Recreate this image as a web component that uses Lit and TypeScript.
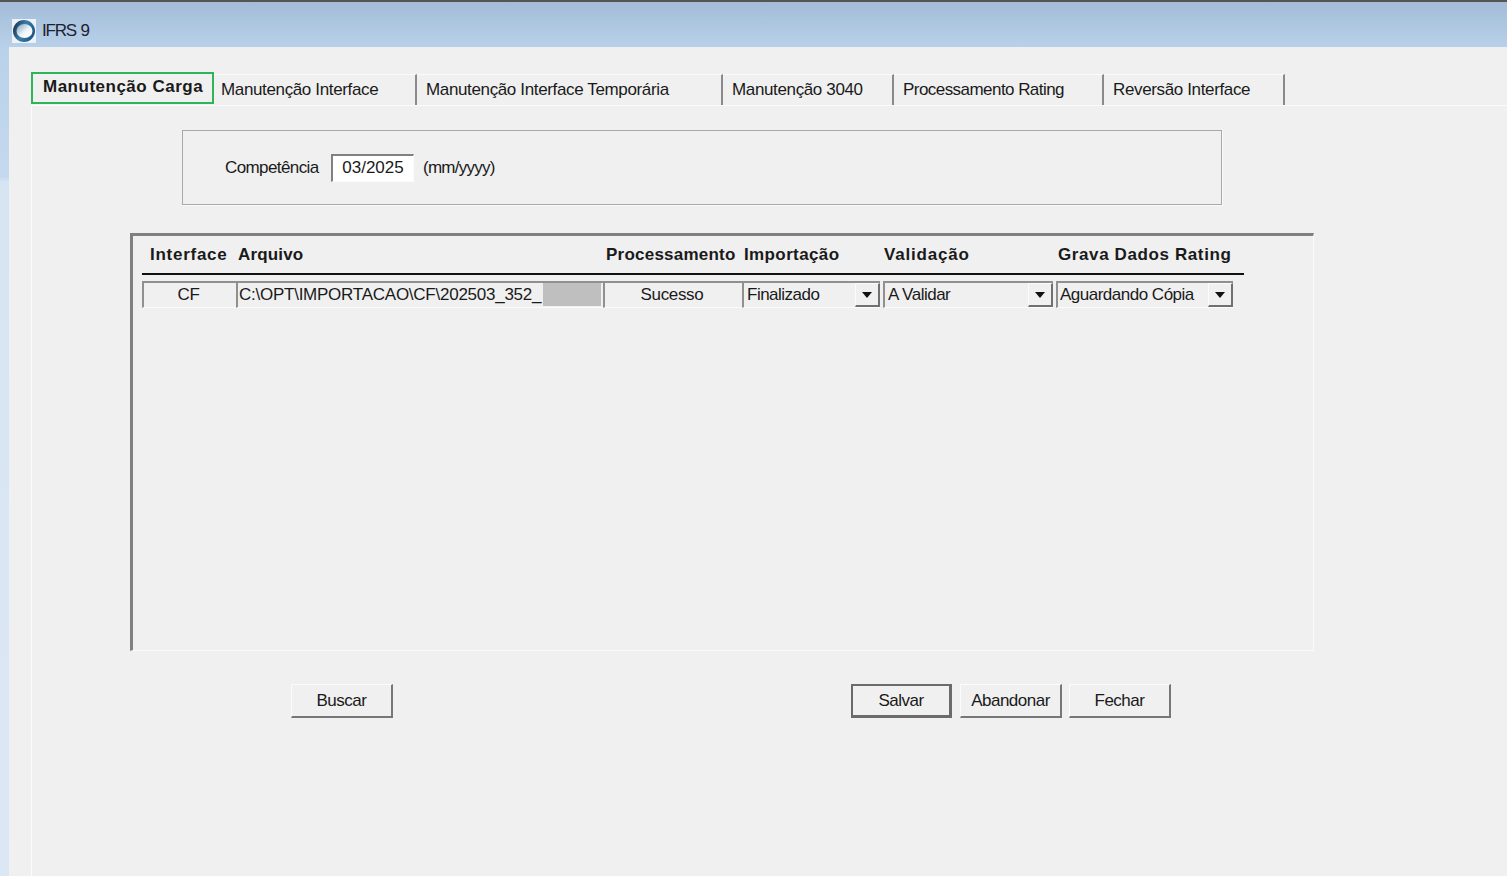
import { LitElement, html, css } from "lit";
import { customElement } from "lit/decorators.js";

const TABS: [string, number, number][] = [
  ["Manutenção Interface", 203, 7],
  ["Manutenção Interface Temporária", 306, 9],
  ["Manutenção 3040", 171, 9],
  ["Processamento Rating", 210, 9],
  ["Reversão Interface", 181, 9],
];

@customElement("app-root")
export class AppRoot extends LitElement {
  static styles = css`
    :host { display: block; height: 876px; overflow: hidden; font-family: "Liberation Sans", Arial, sans-serif; font-size: 17px; color: #1a1a1a; }
    .window { height: 876px; display: flex; flex-direction: column; background: linear-gradient(#a3bcd8, #b9d1ea 47px); border-top: 2px solid #555; box-sizing: border-box; }
    .title { height: 45px; flex: none; display: flex; align-items: center; gap: 6px; padding: 12px 0 0 12px; box-sizing: border-box; color: #1c2230; }
    .title span { letter-spacing: -1.2px; word-spacing: 1px; }
    .body { flex: 1; display: flex; min-height: 0; }
    .edge { width: 9px; flex: none; background: linear-gradient(#b9d1ea 0, #c5d9ee 130px, #d7e4f2 135px, #dbe7f4 100%); }
    .client { flex: 1; background: #f0f0f0; padding: 25px 0 0 22px; display: flex; flex-direction: column; min-width: 0; }
    .tabs { display: flex; height: 33px; align-items: flex-end; flex: none; }
    .tab { box-sizing: border-box; height: 31px; border-top: 1px solid #fbfbfb; border-right: 2px solid #8a8a8a; padding: 3px 0 0 5px; letter-spacing: -0.36px; line-height: 24px; white-space: nowrap; }
    .tab:nth-child(5) { letter-spacing: -0.55px; }
    .tab.active { width: 183px; height: 32px; align-self: flex-start; border: 2px solid #2fb457; padding: 1px 0 0 10px; font-weight: 700; line-height: 24px; letter-spacing: 0.5px; margin-bottom: 1px; }
    .panel { flex: 1; border-top: 1px solid #fbfbfb; border-left: 1px solid #fbfbfb; display: flex; flex-direction: column; align-items: flex-start; }
    .group { box-sizing: border-box; width: 1040px; height: 75px; margin: 24px 0 0 150px; border: 1px solid #a9a9a9; box-shadow: 1px 1px 0 #fbfbfb; display: flex; align-items: center; padding-left: 42px; }
    .group label { width: 106px; letter-spacing: -0.6px; }
    .input { box-sizing: border-box; width: 83px; height: 28px; background: #fff; border: 1px solid #fbfbfb; border-top: 2px solid #808080; border-left: 2px solid #808080; display: flex; align-items: center; justify-content: center; }
    .hint { margin-left: 9px; letter-spacing: -0.75px; }
    .frame { box-sizing: border-box; width: 1184px; height: 418px; margin: 28px 0 0 98px; border: 1px solid #fbfbfb; border-top: 3px solid #808080; border-left: 3px solid #808080; padding: 0 0 0 9px; }
    .grid { display: grid; width: 1102px; grid-template-columns: 94px 367px 139px 141px 173px 177px 11px; }
    .head { height: 37px; border-bottom: 2px solid #111; align-items: center; font-weight: 700; }
    .head div { padding-left: 2px; white-space: nowrap; }
    .head div:nth-child(1) { padding-left: 8px; letter-spacing: 0.73px; }
    .head div:nth-child(2) { letter-spacing: 0.15px; }
    .head div:nth-child(3) { padding-left: 3px; letter-spacing: 0.23px; }
    .head div:nth-child(4) { letter-spacing: 0.38px; }
    .head div:nth-child(5) { padding-left: 1px; letter-spacing: 0.8px; }
    .head div:nth-child(6) { letter-spacing: 0.61px; }
    .row { margin-top: 6px; height: 28px; }
    .cell { box-sizing: border-box; height: 27px; border-top: 2px solid #909090; border-left: 2px solid #909090; border-bottom: 1px solid #fbfbfb; display: flex; align-items: center; white-space: nowrap; letter-spacing: -0.35px; position: relative; }
    .center { justify-content: center; padding-right: 3px; }
    .path { padding-left: 1px; letter-spacing: -0.25px; }
    .mask { position: absolute; left: 305px; top: 0; width: 58px; height: 23px; background: #bfbfbf; }
    .combo { padding-left: 3px; justify-content: space-between; margin-right: 3px; letter-spacing: -0.5px; }
    .combo:last-child { margin-right: 0; padding-left: 2px; }
    .arrow { box-sizing: border-box; width: 25px; height: 24px; display: flex; align-items: center; justify-content: center; background: #f0f0f0; border-top: 1px solid #fbfbfb; border-left: 1px solid #fbfbfb; border-right: 2px solid #707070; border-bottom: 2px solid #707070; flex: none; }
    .arrow i { width: 0; height: 0; border: 5px solid transparent; border-top: 6px solid #111; border-bottom: 0; }
    .actions { display: flex; margin: 33px 0 0 259px; }
    .btn { box-sizing: border-box; width: 102px; height: 34px; background: #f0f0f0; border: 1px solid #fbfbfb; border-right: 2px solid #777; border-bottom: 2px solid #777; display: flex; align-items: center; justify-content: center; letter-spacing: -0.5px; margin-right: 7px; }
    .btn.default { width: 101px; margin-right: 8px; border: 2px solid #6b6b6b; border-right-width: 3px; border-bottom-width: 3px; }
    .spacer { width: 451px; }
  `;

  private combo(label: string) {
    return html`<div class="cell combo"><span>${label}</span><div class="arrow"><i></i></div></div>`;
  }

  render() {
    return html`
      <div class="window">
        <div class="title">
          <svg width="24" height="24" viewBox="0 0 24 24">
            <defs>
              <linearGradient id="ring" x1="0" y1="0" x2="1" y2="0.4">
                <stop offset="0" stop-color="#17233f" />
                <stop offset="0.55" stop-color="#3c7ea8" />
                <stop offset="1" stop-color="#1f5a86" />
              </linearGradient>
              <linearGradient id="core" x1="0.1" y1="0.1" x2="0.9" y2="0.9">
                <stop offset="0" stop-color="#8fb0cc" />
                <stop offset="0.55" stop-color="#eef4fa" />
                <stop offset="1" stop-color="#ffffff" />
              </linearGradient>
            </defs>
            <rect width="24" height="24" fill="#edf2f8" />
            <circle cx="12" cy="12" r="11" fill="url(#ring)" />
            <ellipse cx="12.5" cy="12" rx="8" ry="7" fill="url(#core)" />
          </svg>
          <span>IFRS 9</span>
        </div>
        <div class="body">
          <div class="edge"></div>
          <div class="client">
            <div class="tabs">
              <div class="tab active">Manutenção Carga</div>
              ${TABS.map(([t, w, p]) => html`<div class="tab" style="width:${w}px;padding-left:${p}px">${t}</div>`)}
            </div>
            <div class="panel">
              <div class="group">
                <label>Competência</label>
                <div class="input">03/2025</div>
                <span class="hint">(mm/yyyy)</span>
              </div>
              <div class="frame">
                <div class="grid head">
                  <div>Interface</div><div>Arquivo</div><div>Processamento</div>
                  <div>Importação</div><div>Validação</div><div>Grava Dados Rating</div><div></div>
                </div>
                <div class="grid row">
                  <div class="cell center">CF</div>
                  <div class="cell path">C:\\OPT\\IMPORTACAO\\CF\\202503_352_<div class="mask"></div></div>
                  <div class="cell center">Sucesso</div>
                  ${this.combo("Finalizado")}
                  ${this.combo("A Validar")}
                  ${this.combo("Aguardando Cópia")}
                </div>
              </div>
              <div class="actions">
                <div class="btn">Buscar</div>
                <div class="spacer"></div>
                <div class="btn default">Salvar</div>
                <div class="btn">Abandonar</div>
                <div class="btn">Fechar</div>
              </div>
            </div>
          </div>
        </div>
      </div>
    `;
  }
}
